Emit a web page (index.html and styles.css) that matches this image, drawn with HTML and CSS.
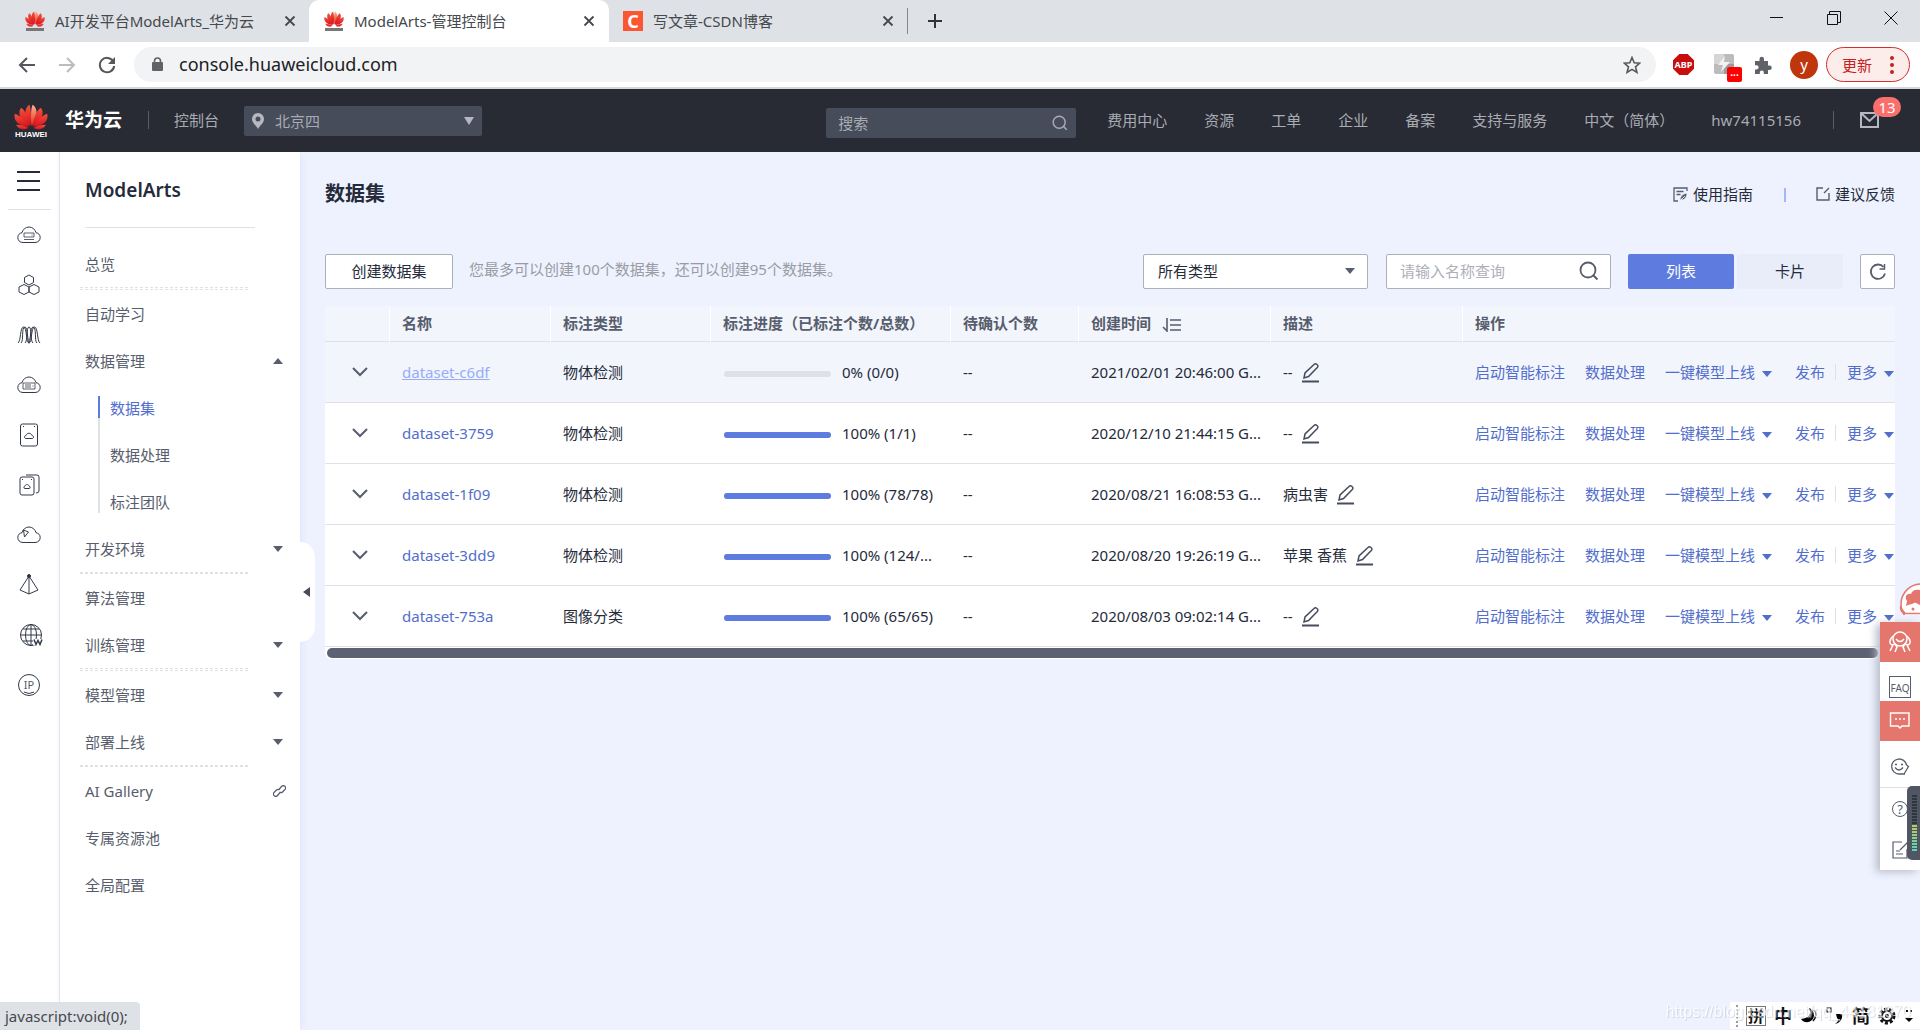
FILE: index.html
```html
<!DOCTYPE html>
<html lang="zh-CN">
<head>
<meta charset="utf-8">
<title>ModelArts-管理控制台</title>
<link rel="stylesheet" href="styles.css">
</head>
<body>
<svg class="defs" width="0" height="0" aria-hidden="true">
  <defs>
    <linearGradient id="petal" x1="0" y1="0" x2="0" y2="1"><stop offset="0" stop-color="#f4523f"/><stop offset="1" stop-color="#d8101a"/></linearGradient>
    <linearGradient id="petalLight" x1="0" y1="0" x2="0" y2="1"><stop offset="0" stop-color="#fbb48c"/><stop offset="1" stop-color="#e0301f"/></linearGradient>
    <symbol id="huawei" viewBox="0 0 40 32" preserveAspectRatio="none">
      <g fill="url(#petal)">
        <path d="M19.500 27C11 17 12 5 18 1c2 3 2.500 15 1.500 26z"/>
        <path fill="url(#petalLight)" d="M20.500 27C29 17 28 5 22 1c-2 3-2.500 15-1.500 26z"/>
        <path d="M18.500 27.500C6 21 4 9 8.500 4.500c4 2 9 13 10 23z"/>
        <path d="M21.500 27.500c12.500-6.500 14.500-18.500 10-23-4 2-9 13-10 23z"/>
        <path d="M17.500 28C4 27-1 19 1 12c6 2 13 9 16.500 16z"/>
        <path d="M22.500 28c13.500-1 18.500-9 16.500-16-6 2-13 9-16.500 16z"/>
        <path d="M17 29.500C11 33 5 31 2.500 25.500c5 0 10 1 14.500 4z"/>
        <path d="M23 29.500c6 3.500 12 1.500 14.500-4-5 0-10 1-14.500 4z"/>
      </g>
    </symbol>
    <symbol id="close" viewBox="0 0 12 12"><path d="M1.500 1.500l9 9m0-9l-9 9" stroke="currentColor" stroke-width="1.800" fill="none"/></symbol>
    <symbol id="chevron" viewBox="0 0 16 10"><path d="M1 1l7 7 7-7" stroke="#575d6c" stroke-width="2" fill="none"/></symbol>
    <symbol id="down" viewBox="0 0 10 6"><path d="M0 0h10L5 6z" fill="currentColor"/></symbol>
    <symbol id="edit" viewBox="0 0 18 20"><path d="M2 15l1-5 9-8.500c1-1 2-.8 3 0 1.200 1 1.200 2 .3 3L6.500 13.500 2 15z" fill="none" stroke="#464c5b" stroke-width="1.500"/><path d="M0 18.500h17" stroke="#464c5b" stroke-width="2"/></symbol>
    <symbol id="search" viewBox="0 0 20 20"><circle cx="9" cy="9" r="7.500" fill="none" stroke="currentColor" stroke-width="1.800"/><path d="M14 14l4.500 4.500" stroke="currentColor" stroke-width="2"/></symbol>
    <symbol id="cloud" viewBox="0 0 24 18"><path d="M6 16.500C2.500 16.500.8 14 .8 11.500S2.500 7 5 6.700C5.800 3.500 8.500 1 12 1s6.200 2.500 7 5.700c2.500.3 4.200 2.300 4.200 4.800s-1.700 5-5.200 5z"/></symbol>
  </defs>
</svg>

<header class="browser">
  <div class="tabs">
    <div class="tab">
      <svg class="fav"><use href="#huawei" height="16" width="20"/><rect x="1" y="17" width="18" height="3" fill="#777"/></svg>
      <span>AI开发平台ModelArts_华为云</span>
      <button class="plain" aria-label="关闭标签页"><svg width="12" height="12"><use href="#close"/></svg></button>
    </div>
    <div class="tab tab-active">
      <svg class="fav"><use href="#huawei" height="16" width="20"/><rect x="1" y="17" width="18" height="3" fill="#777"/></svg>
      <span>ModelArts-管理控制台</span>
      <button class="plain" aria-label="关闭标签页"><svg width="12" height="12"><use href="#close"/></svg></button>
    </div>
    <div class="tab">
      <b class="csdn">C</b>
      <span>写文章-CSDN博客</span>
      <button class="plain" aria-label="关闭标签页"><svg width="12" height="12"><use href="#close"/></svg></button>
    </div>
    <button class="plain newtab" aria-label="新标签页"><svg width="16" height="16"><path d="M8 1v14M1 8h14" stroke="#333" stroke-width="2"/></svg></button>
    <div class="winctl">
      <button class="plain" aria-label="最小化"><svg width="14" height="14"><path d="M0 6.500h13" stroke="#111"/></svg></button>
      <button class="plain" aria-label="还原"><svg width="14" height="14"><path d="M.5 3.500h10v10H.5zM2.500 3V.5h11v11H11" stroke="#111" fill="none"/></svg></button>
      <button class="plain" aria-label="关闭"><svg width="14" height="14"><path d="M.5.5l13 13m0-13l-13 13" stroke="#111"/></svg></button>
    </div>
  </div>
  <div class="toolbar">
    <button class="plain" aria-label="后退"><svg width="18" height="16"><path d="M17 8H2m7-7L2 8l7 7" stroke="#54575b" stroke-width="2" fill="none"/></svg></button>
    <button class="plain" aria-label="前进"><svg width="18" height="16"><path d="M1 8h15M9 1l7 7-7 7" stroke="#babcbe" stroke-width="2" fill="none"/></svg></button>
    <button class="plain" aria-label="刷新"><svg width="18" height="18"><path d="M15 5A7.200 7.200 0 1 0 16.200 10" stroke="#54575b" stroke-width="2" fill="none"/><path d="M17 1v7h-7z" fill="#54575b"/></svg></button>
    <div class="omnibox">
      <svg width="12" height="15"><rect y="5" x="1" width="11" height="9" rx="1" fill="#5f6368"/><path d="M3.500 6V4a3 3 0 0 1 6 0v2" stroke="#5f6368" stroke-width="1.600" fill="none"/></svg>
      <input type="text" aria-label="地址" value="console.huaweicloud.com">
      <button class="plain" aria-label="收藏"><svg width="18" height="18"><path d="M9 1.500l2.200 5.200 5.600.4-4.300 3.700 1.400 5.600L9 13.400l-4.900 3 1.400-5.600L1.200 7.100l5.600-.4z" stroke="#54575b" stroke-width="1.600" fill="none"/></svg></button>
    </div>
    <div class="exts">
      <span class="abp">ABP</span>
      <span class="ext"><svg width="22" height="22"><rect width="20" height="20" rx="2" fill="#bcbcbc"/><rect width="10" height="10" fill="#d6d6d6"/><rect x="10" y="10" width="10" height="10" fill="#9c9c9c"/><path d="M11 2L4 11h5l-2 7 9-10h-6z" fill="#f2f2f2"/></svg><i>...</i></span>
      <svg width="18" height="18"><path d="M1 5h4.500V3a2 2 0 0 1 4.500 0v2h4v4.500h1.500a2 2 0 0 1 0 4.500H14v4H9.800v-1.500a2 2 0 0 0-4 0V18H1v-4.500h1.500a2 2 0 0 0 0-4.300H1z" fill="#5f6368"/></svg>
      <span class="avatar">y</span>
      <button class="update">更新<svg width="4" height="18"><g fill="#c5221f"><circle cx="2" cy="2" r="2"/><circle cx="2" cy="9" r="2"/><circle cx="2" cy="16" r="2"/></g></svg></button>
    </div>
  </div>
</header>

<nav class="topnav">
  <a class="brand" href="#"><span class="logo"><svg width="34" height="26"><use href="#huawei"/></svg><small>HUAWEI</small></span><b>华为云</b></a>
  <i class="vline"></i>
  <a class="console" href="#">控制台</a>
  <button class="region"><svg width="12" height="16"><path fill-rule="evenodd" d="M6 0a6 6 0 0 1 6 6c0 4-4 6.500-6 10C4 12.500 0 10 0 6a6 6 0 0 1 6-6zm0 3.500a2.500 2.500 0 1 0 0 5 2.500 2.500 0 0 0 0-5z" fill="#b5b8c0"/></svg><span>北京四</span><svg class="tri" width="10" height="8"><path d="M0 0h10L5 8z" fill="#b5b8c0"/></svg></button>
  <label class="topsearch"><input type="text" placeholder="搜索" aria-label="搜索"><svg width="16" height="16"><use href="#search"/></svg></label>
  <div class="links">
    <a href="#">费用中心</a><a href="#">资源</a><a href="#">工单</a><a href="#">企业</a><a href="#">备案</a><a href="#">支持与服务</a><a href="#">中文（简体）</a><a href="#">hw74115156</a>
  </div>
  <i class="vline"></i>
  <a class="mail" href="#" aria-label="消息"><svg width="20" height="16"><path d="M1 1h17v14H1zM2 2l7.500 7L17 2" fill="none" stroke="#b5b8c0" stroke-width="2"/></svg><span>13</span></a>
</nav>

<div class="shell">
  <nav class="rail">
    <button class="plain menu" aria-label="菜单"><svg width="24" height="22"><path d="M0 2h23M0 11h23M0 20h23" stroke="#252b3a" stroke-width="2"/></svg></button>
    <a href="#" aria-label="云服务器"><svg class="ic" width="24" height="24"><use href="#cloud" y="3" width="24" height="18"/><path d="M7 10h10v4H7zM7 16.500h10M14.500 12h1" stroke-width=".8"/></svg></a>
    <a href="#" aria-label="伸缩"><svg class="ic" width="24" height="24"><path d="M12 2l4.500 2.500v5L12 12l-4.500-2.500v-5zM7 11.500l5 2.500v5L7 21.500 2 19v-5zM17 11.500l5 2.500v5l-5 2.500-5-2.500v-5z"/></svg></a>
    <a href="#" aria-label="监控"><svg class="ic" width="24" height="24"><path d="M1 20C4 18 3 4 6.500 4S9 20 12 20s2-16 5.500-16S20 18 23 20M4 20C7 18 4 4 8 4c3 0 2 16 5 16M11 20c3 0 2-16 5-16 4 0 1 14 4 16M8 20c3-2 1-16 4-16s1 14 4 16"/></svg></a>
    <a href="#" aria-label="云缓存"><svg class="ic" width="24" height="24"><use href="#cloud" y="3" width="24" height="18"/><path d="M6 10h12v6H6zM8 12h6M8 14h6M16 12.500v1" stroke-width=".8"/></svg></a>
    <a href="#" aria-label="云硬盘"><svg class="ic" width="24" height="24"><rect x="3.500" y="1" width="17" height="22" rx="2"/><path d="M9 15.500c-2 0-2-3 0-3 1-3 5-3 6 0 2 0 2 3 0 3zM6 3.500h1M17 3.500h1"/></svg></a>
    <a href="#" aria-label="备份"><svg class="ic" width="24" height="24"><rect x="3" y="4" width="14" height="18" rx="2"/><path d="M9 2h11q2 0 2 2v14q0 2-3 2M8 15.500c-1.500 0-1.500-2 0-2.500 1-2 3-2 4 0 1.500.5 1.500 2.500 0 2.500zM5 6.500h1M14 6.500h1"/></svg></a>
    <a href="#" aria-label="网络"><svg class="ic" width="24" height="24"><use href="#cloud" y="3" width="24" height="18"/><path d="M6.500 7l1 7M6.500 7l5 2-4 5"/></svg></a>
    <a href="#" aria-label="弹性"><svg class="ic" width="24" height="24"><path d="M12 3L3 17l9 4 9-4zM12 3v18"/><circle cx="12" cy="3" r="1.500" fill="#252b3a"/></svg></a>
    <a class="globe" href="#" aria-label="域名"><svg class="ic" width="24" height="24"><circle cx="12" cy="12" r="10.500"/><ellipse cx="12" cy="12" rx="5.500" ry="10.500"/><path d="M12 1.500v21M1.500 12h21M4 6h16M4 18h12"/><path d="M14 16h9v6h-9z" fill="#fff" stroke="none"/><path d="M15 16.500l2 5 2-4 2 4 2-5" stroke-width="1.500"/></svg></a>
    <a href="#" aria-label="公网IP"><svg class="ic" width="24" height="24"><circle cx="12" cy="12" r="10.500"/><path d="M7 19q5 3 10 0"/><text x="12" y="16" text-anchor="middle">IP</text></svg></a>
  </nav>

  <aside class="side">
    <h2>ModelArts</h2>
    <ul>
      <li class="dash double"><a href="#">总览</a></li>
      <li><a href="#">自动学习</a></li>
      <li><a href="#">数据管理<svg class="up" width="10" height="6"><use href="#down"/></svg></a>
        <ul class="sub">
          <li class="on"><a href="#">数据集</a></li>
          <li><a href="#">数据处理</a></li>
          <li><a href="#">标注团队</a></li>
        </ul>
      </li>
      <li class="dash"><a href="#">开发环境<svg width="10" height="6"><use href="#down"/></svg></a></li>
      <li><a href="#">算法管理</a></li>
      <li class="dash double"><a href="#">训练管理<svg width="10" height="6"><use href="#down"/></svg></a></li>
      <li><a href="#">模型管理<svg width="10" height="6"><use href="#down"/></svg></a></li>
      <li class="dash"><a href="#">部署上线<svg width="10" height="6"><use href="#down"/></svg></a></li>
      <li><a href="#" class="gallery">AI Gallery<svg width="13" height="12" fill="none" stroke="#575d6c" stroke-width="1.200"><path d="M6 4.500l2.500-3a2.200 2.200 0 0 1 3.500 3L9.500 7a2 2 0 0 1-3 0M7 7.500l-2.500 3a2.200 2.200 0 0 1-3.500-3L3.500 5a2 2 0 0 1 3 0"/></svg></a></li>
      <li><a href="#">专属资源池</a></li>
      <li><a href="#">全局配置</a></li>
    </ul>
    <button class="plain fold" aria-label="收起"><svg width="7" height="10"><path d="M7 0v10L0 5z" fill="#464c5b"/></svg></button>
  </aside>

  <main>
    <div class="titlebar">
      <h1>数据集</h1>
      <a href="#"><svg width="15" height="15" fill="none" stroke="#575d6c" stroke-width="1.300"><path d="M14 4V1H1v13h4M3.500 4.500h7M3.500 7.500h4"/><path d="M7 13c0-3 2-6 7-7 0 4-2 7-6 7l4-4" fill="#575d6c" stroke="#eef2ff" stroke-width=".8"/></svg>使用指南</a>
      <i></i>
      <a href="#"><svg width="14" height="14" fill="none" stroke="#575d6c" stroke-width="1.400"><path d="M7 1H1v12h12V6M8 6l5-5"/></svg>建议反馈</a>
    </div>
    <div class="filters">
      <button class="btn create">创建数据集</button>
      <p>您最多可以创建100个数据集，还可以创建95个数据集。</p>
      <div class="select"><select aria-label="类型"><option>所有类型</option></select><svg width="10" height="6"><use href="#down"/></svg></div>
      <label class="query"><input type="text" placeholder="请输入名称查询" aria-label="名称"><svg width="20" height="20"><use href="#search"/></svg></label>
      <div class="switch"><button class="on">列表</button><button>卡片</button></div>
      <button class="btn refresh" aria-label="刷新"><svg width="18" height="18"><path d="M14.500 4A7.200 7.200 0 1 0 16 10.500" stroke="#575d6c" stroke-width="1.800" fill="none"/><path d="M15.500 1v5h-5" stroke="#575d6c" stroke-width="1.500" fill="none"/></svg></button>
    </div>
    <div class="tablewrap">
    <table>
      <colgroup><col class="c-x"><col class="c-name"><col class="c-type"><col class="c-prog"><col class="c-wait"><col class="c-time"><col class="c-desc"><col class="c-ops"></colgroup>
      <thead><tr><th></th><th>名称</th><th>标注类型</th><th>标注进度（已标注个数/总数）</th><th>待确认个数</th><th>创建时间<svg class="sort" width="19" height="14" fill="none" stroke="#575d6c" stroke-width="1.600"><path d="M5 0v13L1 9M8 2h11M8 7h11M8 12h11"/></svg></th><th>描述</th><th>操作</th></tr></thead>
      <tbody>
        <tr class="hover"><td><button class="plain" aria-label="展开"><svg width="16" height="10"><use href="#chevron"/></svg></button></td><td><a href="#">dataset-c6df</a></td><td>物体检测</td><td><div class="prog"><span class="bar"><b style="width:0%"></b></span><span class="pt">0% (0/0)</span></div></td><td>--</td><td>2021/02/01 20:46:00 G...</td><td><div class="desc">--<svg width="18" height="20"><use href="#edit"/></svg></div></td><td><div class="ops"><a href="#">启动智能标注</a><a href="#">数据处理</a><a href="#">一键模型上线<svg width="10" height="6"><use href="#down"/></svg></a><a href="#">发布</a><a href="#">更多<svg width="10" height="6"><use href="#down"/></svg></a></div></td></tr>
        <tr><td><button class="plain" aria-label="展开"><svg width="16" height="10"><use href="#chevron"/></svg></button></td><td><a href="#">dataset-3759</a></td><td>物体检测</td><td><div class="prog"><span class="bar"><b style="width:100%"></b></span><span class="pt">100% (1/1)</span></div></td><td>--</td><td>2020/12/10 21:44:15 G...</td><td><div class="desc">--<svg width="18" height="20"><use href="#edit"/></svg></div></td><td><div class="ops"><a href="#">启动智能标注</a><a href="#">数据处理</a><a href="#">一键模型上线<svg width="10" height="6"><use href="#down"/></svg></a><a href="#">发布</a><a href="#">更多<svg width="10" height="6"><use href="#down"/></svg></a></div></td></tr>
        <tr><td><button class="plain" aria-label="展开"><svg width="16" height="10"><use href="#chevron"/></svg></button></td><td><a href="#">dataset-1f09</a></td><td>物体检测</td><td><div class="prog"><span class="bar"><b style="width:100%"></b></span><span class="pt">100% (78/78)</span></div></td><td>--</td><td>2020/08/21 16:08:53 G...</td><td><div class="desc">病虫害<svg width="18" height="20"><use href="#edit"/></svg></div></td><td><div class="ops"><a href="#">启动智能标注</a><a href="#">数据处理</a><a href="#">一键模型上线<svg width="10" height="6"><use href="#down"/></svg></a><a href="#">发布</a><a href="#">更多<svg width="10" height="6"><use href="#down"/></svg></a></div></td></tr>
        <tr><td><button class="plain" aria-label="展开"><svg width="16" height="10"><use href="#chevron"/></svg></button></td><td><a href="#">dataset-3dd9</a></td><td>物体检测</td><td><div class="prog"><span class="bar"><b style="width:100%"></b></span><span class="pt">100% (124/...</span></div></td><td>--</td><td>2020/08/20 19:26:19 G...</td><td><div class="desc">苹果 香蕉<svg width="18" height="20"><use href="#edit"/></svg></div></td><td><div class="ops"><a href="#">启动智能标注</a><a href="#">数据处理</a><a href="#">一键模型上线<svg width="10" height="6"><use href="#down"/></svg></a><a href="#">发布</a><a href="#">更多<svg width="10" height="6"><use href="#down"/></svg></a></div></td></tr>
        <tr><td><button class="plain" aria-label="展开"><svg width="16" height="10"><use href="#chevron"/></svg></button></td><td><a href="#">dataset-753a</a></td><td>图像分类</td><td><div class="prog"><span class="bar"><b style="width:100%"></b></span><span class="pt">100% (65/65)</span></div></td><td>--</td><td>2020/08/03 09:02:14 G...</td><td><div class="desc">--<svg width="18" height="20"><use href="#edit"/></svg></div></td><td><div class="ops"><a href="#">启动智能标注</a><a href="#">数据处理</a><a href="#">一键模型上线<svg width="10" height="6"><use href="#down"/></svg></a><a href="#">发布</a><a href="#">更多<svg width="10" height="6"><use href="#down"/></svg></a></div></td></tr>
      </tbody>
    </table>
    </div>
    <div class="scroll"><span></span></div>
  </main>
</div>

<svg class="mascot" width="21" height="32" viewBox="0 0 21 32"><circle cx="22" cy="21" r="20" fill="#fff" stroke="#e4766d" stroke-width="1.500"/><path d="M1 22c2 4 5 6 6 9C3 31 0 28 1 22zM8 18c-3-4 0-8 4-7 1-4 5-5 9-4v15c-3-1-4-3-6-2-3 2-5 1-8 3z" fill="#e4766d"/><circle cx="14" cy="26" r="1.500" fill="#e4766d"/><path d="M5 30.500h16" stroke="#e4766d" stroke-width="1.500"/></svg>
<aside class="float">
  <button class="red" aria-label="客服"><svg width="22" height="22" fill="none" stroke="#fff" stroke-width="1.500"><circle cx="11" cy="8" r="7"/><path d="M7 8q4 5 8 0M4 5c-4 4-4 8-1 9l3-1 2 3-2 5M1 20l3-6M18 5c4 4 4 8 1 9l-3-1-2 3 2 5M21 20l-3-6"/></svg></button>
  <button class="faq" aria-label="FAQ"><span>FAQ</span></button>
  <button class="red" aria-label="咨询"><svg width="22" height="18" fill="none" stroke="#fff" stroke-width="1.400"><path d="M1.500 1h18.500v13h-7l-2 2-2-2H1.500zM6 7h2m2 0h2m2 0h2"/></svg></button>
  <button class="smile" aria-label="满意度"><svg width="20" height="18" fill="none" stroke="#575d6c" stroke-width="1.300"><path d="M15 16H9a7.500 7.500 0 1 1 7.500-9l2 1.500L14 16M5 9.500q4 5 8 0M5 6.500h2M11 6.500h2"/></svg></button>
  <button aria-label="帮助"><svg width="18" height="18"><circle cx="9" cy="9" r="7.500" fill="none" stroke="#575d6c"/><text x="9" y="14" text-anchor="middle">?</text></svg></button>
  <button aria-label="反馈"><svg width="18" height="18" fill="none" stroke="#575d6c" stroke-width="1.200"><path d="M11 1H2v16h14V8M5 10h4M5 13h7M9 9l8-8"/></svg></button>
</aside>
<div class="gauge"></div>
<div class="status">javascript:void(0);</div>
<div class="ime"><i></i><span class="boxed">拼</span><span>中</span><svg width="18" height="18"><path d="M9 1c3 6 0 10-8 11 4 6 13 3 13-4 0-3-2-6-5-7z"/><path d="M14 3c3 3 2 8-1 11" fill="none" stroke="#111" stroke-width="1.500"/></svg><svg width="18" height="18"><rect x="1" y="1" width="4" height="4" fill="none" stroke="#111"/><path d="M10 7h6c1 5-2 9-7 10 3-2 4-4 2-6z"/></svg><span>简</span><svg width="18" height="18"><circle cx="9" cy="9" r="7" fill="none" stroke="#111" stroke-width="3" stroke-dasharray="3 2"/><circle cx="9" cy="9" r="5" fill="none" stroke="#111" stroke-width="2"/><circle cx="9" cy="9" r="2"/></svg><svg width="10" height="16"><path d="M2 3h2m2 0h2" stroke="#111" stroke-width="2"/><path d="M1 10h8l-4 4z"/></svg></div>
<div class="watermark">https://blog.csdn.net/qq_44181970</div>
</body>
</html>
```
FILE: styles.css
```css
* { box-sizing: border-box; }
body {
  margin: 0; min-height: 100vh; display: flex; flex-direction: column;
  font: 15px/22px "Noto Sans", "Noto Sans CJK SC", sans-serif;
  color: #252b3a; background: #eef2ff;
}
.defs { position: absolute; }
svg { flex: none; display: block; }
a { color: inherit; text-decoration: none; }
button, input, select { font: inherit; color: inherit; }
button { cursor: pointer; padding: 0; }
input { border: 0; outline: 0; background: none; padding: 0; min-width: 0; }
ul { list-style: none; margin: 0; padding: 0; }
h1, h2, p { margin: 0; }
.plain { border: 0; background: none; display: flex; align-items: center; justify-content: center; }

/* browser frame */
.browser { background: #fff; border-bottom: 2px solid #d5d7dc; }
.tabs { display: flex; align-items: center; height: 42px; background: #dee1e6; color: #45494d; }
.tab { display: flex; align-items: center; width: 298px; height: 42px; padding: 0 13px 0 14px; }
.tab:first-child { width: 309px; padding-left: 25px; }
.tab-active { width: 300px; padding: 0 14px 0 15px; background: #fff; border-radius: 10px 10px 0 0; }
.tab span { flex: 1; margin-left: 10px; white-space: nowrap; }
.fav { width: 20px; height: 20px; }
.csdn { width: 20px; height: 20px; background: #fc5531; color: #fff; text-align: center; font-size: 18px; line-height: 20px; }
.newtab { border-left: 1px solid #85888c; height: 26px; padding-left: 19px; }
.winctl { margin-left: auto; display: flex; gap: 43px; padding: 0 22px 6px 0; }
.toolbar { display: flex; align-items: center; height: 45px; padding-left: 18px; gap: 22px; }
.omnibox { flex: 1; display: flex; align-items: center; height: 35px; border-radius: 18px; background: #f1f3f4; padding: 0 15px 0 17px; margin-left: -4px; }
.omnibox input { flex: 1; height: 26px; margin: 0 0 2px 16px; font-size: 18px; color: #202124; }
.exts { display: flex; align-items: center; margin-left: -5px; padding-right: 10px; }
.abp { width: 21px; height: 21px; background: #c70d0d; color: #fff; font: bold 9px/21px "Noto Sans", sans-serif; text-align: center; clip-path: polygon(30% 0, 70% 0, 100% 30%, 100% 70%, 70% 100%, 30% 100%, 0 70%, 0 30%); }
.ext { position: relative; margin: 0 18px 0 20px; }
.ext i { position: absolute; left: 13px; top: 13px; width: 15px; height: 15px; border-radius: 2px; background: #f00; color: #fff; font: bold 10px/11px "Noto Sans", sans-serif; text-align: center; }
.avatar { width: 28px; height: 28px; border-radius: 50%; background: #bf360c; color: #fff; text-align: center; line-height: 26px; margin: 0 8px 0 18px; }
.update { display: flex; align-items: center; justify-content: space-between; width: 84px; height: 35px; padding: 0 15px; border: 1px solid #d3302b; border-radius: 18px; background: #fcecea; color: #c5221f; }

/* console header */
.topnav { position: relative; z-index: 1; display: flex; align-items: center; height: 63px; background: #282b33; color: #a8abb3; padding: 0 40px 2px 14px; }
.brand { display: flex; align-items: center; gap: 17px; color: #fff; }
.brand b { font-size: 19px; }
.logo { display: flex; flex-direction: column; align-items: center; gap: 1px; width: 34px; padding-top: 4px; }
.logo small { font: bold 8px/8px "Liberation Sans", sans-serif; }
.vline { width: 1px; height: 18px; background: #575d6c; margin: 0 25px 0 26px; }
.region { display: flex; align-items: center; gap: 11px; width: 238px; height: 30px; margin: 2px 0 0 25px; padding: 0 8px; border: 0; border-radius: 2px; background: #464c59; }
.tri { margin-left: auto; }
.topsearch { display: flex; align-items: center; width: 250px; height: 30px; margin: 6px 31px 0 auto; padding: 0 8px 0 12px; border-radius: 2px; background: #464c59; }
.topsearch input { flex: 1; }
.topsearch input::placeholder { color: #a8abb3; opacity: 1; }
.links { display: flex; gap: 37px; }
.topnav .links + .vline { margin: 0 26px 0 32px; }
.mail { position: relative; width: 20px; }
.mail span { position: absolute; left: 13px; top: -15px; width: 28px; height: 20px; border-radius: 10px; background: #fa6f6c; color: #fff; text-align: center; line-height: 20px; }

/* page shell */
.shell { flex: 1; display: flex; }
.rail { width: 60px; padding-right: 1px; border-right: 1px solid #dfe1e6; background: #fff; display: flex; flex-direction: column; align-items: center; }
.menu { height: 58px; width: 43px; border-bottom: 1px solid #dfe1e6; }
.rail a { height: 50px; display: flex; align-items: center; }
.rail .globe { padding-left: 4px; }
.ic { fill: none; stroke: #333948; }
.ic text { font: 11px "Noto Sans", sans-serif; fill: #575d6c; stroke: none; }
.side { position: relative; width: 240px; background: #fff; padding-left: 20px; color: #575d6c; box-shadow: 2px 0 8px #dfe6fa; }
.side h2 { margin: 0 45px 12px 5px; height: 76px; border-bottom: 1px solid #dfe1e6; font-size: 19px; line-height: 76px; font-weight: 600; color: #252b3a; }
.side a { display: flex; align-items: center; justify-content: space-between; height: 47px; padding: 0 17px 0 5px; }
.side .gallery { padding-right: 14px; }
.up { transform: rotate(180deg); }
.dash::after { content: ""; display: block; width: 170px; height: 2px; background: repeating-linear-gradient(90deg, #dfe1e6 0 3px, transparent 3px 5px); }
.double::after { height: 3px; background: repeating-linear-gradient(90deg, transparent 0 3px, #fff 3px 5px), linear-gradient(#dfe1e6 1px, #fff 1px 2px, #dfe1e6 2px); }
.sub { position: relative; }
.sub::before { content: ""; position: absolute; left: 18px; top: 12px; bottom: 12px; width: 2px; background: #dfe1e6; }
.sub a { padding-left: 30px; }
.sub .on { color: #526ecc; position: relative; }
.sub .on::before { content: ""; position: absolute; left: 18px; top: 12px; height: 22px; width: 2px; background: #5e7ce0; }
.fold { position: absolute; left: 240px; top: 390px; width: 15px; height: 100px; border-radius: 0 15px 15px 0; background: #fff; padding-right: 3px; }

main { flex: 1; min-width: 0; padding: 0 25px; }
.titlebar { display: flex; align-items: center; height: 84px; }
.titlebar h1 { flex: 1; font-size: 20px; }
.titlebar a { display: flex; align-items: center; gap: 5px; }
.titlebar i { width: 2px; height: 14px; margin: 2px 30px 0 31px; background: #a5b5fa; }
.filters { display: flex; align-items: center; padding: 18px 0 17px; }
.filters p { color: #999ca3; margin: 0 auto 5px 16px; }
.btn { height: 35px; border: 1px solid #adb0b8; border-radius: 2px; background: #fff; }
.create { width: 128px; padding-bottom: 1px; }
.select, .query { display: flex; align-items: center; width: 225px; height: 35px; border: 1px solid #adb0b8; border-radius: 2px; background: #fff; margin-right: 18px; padding: 0 12px 1px 14px; color: #575d6c; }
.select select { flex: 1; appearance: none; border: 0; background: none; color: #252b3a; padding: 0; outline: 0; }
.query input { flex: 1; }
.query { margin-right: 17px; padding: 0 11px 2px 13px; }
.query input::placeholder { color: #adb0b8; opacity: 1; }
.switch { display: flex; gap: 3px; margin-right: 17px; }
.switch button { width: 106px; height: 35px; padding-bottom: 1px; border: 0; border-radius: 2px; background: #e9edfa; }
.switch .on { background: #5e7ce0; color: #fff; }
.refresh { width: 35px; display: flex; align-items: center; justify-content: center; }

.tablewrap { overflow: hidden; }
table { width: 100%; table-layout: fixed; border-collapse: separate; border-spacing: 0; background: #fff; }
.c-x { width: 65px; } .c-name { width: 161px; } .c-type { width: 160px; } .c-prog { width: 240px; }
.c-wait { width: 128px; } .c-time, .c-desc { width: 192px; }
th, td { border-bottom: 1px solid #dfe1e6; padding: 0 0 0 12px; text-align: left; white-space: nowrap; }
th { height: 36px; padding-bottom: 2px; background: #f2f5fc; color: #575d6c; font-weight: bold; border-right: 1px solid #fff; }
th:last-child { border-right: 0; }
td { height: 61px; }
td:first-child { padding: 0; }
td:first-child button { width: 70px; height: 60px; }
td a { color: #526ecc; }
.hover td { background: #f2f5fc; }
.hover td:nth-child(2) a { color: #96adfa; text-decoration: underline; }
.sort { display: inline-block; margin-left: 11px; vertical-align: -3px; }
.prog { display: flex; align-items: center; gap: 11px; padding-left: 1px; }
.bar { width: 107px; height: 6px; border-radius: 3px; background: #dfe1e6; margin-top: 3px; }
.bar b { display: block; height: 6px; border-radius: 3px; background: #5e7ce0; }
.desc { display: flex; align-items: center; gap: 9px; }
.desc svg { margin-top: 2px; }
.ops { display: flex; align-items: center; }
.ops a { display: flex; align-items: center; gap: 7px; margin-right: 20px; }
.ops svg { margin-top: 3px; }
.ops a:nth-child(3) { margin-right: 23px; }
.ops a:nth-child(4) { margin-right: 10px; }
.ops a:last-child { border-left: 1px solid #dfe1e6; padding-left: 11px; margin: 0; line-height: 16px; }
.scroll { height: 12px; margin-right: 15px; padding: 1px 2px; background: #fff; border-radius: 0 0 6px 6px; }
.scroll span { display: block; height: 10px; border-radius: 5px; background: #5c6173; }

/* overlays pinned to the window edge */
.mascot { position: fixed; right: 0; top: 583px; }
.float { position: fixed; right: 0; top: 622px; width: 40px; background: #fff; box-shadow: -4px 2px 8px #b9bdca; display: flex; flex-direction: column; }
.float button { display: flex; align-items: center; justify-content: center; height: 40px; border: 0; background: #fff; }
.float .red { background: #e4766d; }
.float .faq { padding-top: 11px; height: 39px; }
.faq span { width: 22px; height: 22px; border: 1px solid #575d6c; font: 10px/22px "Noto Sans", sans-serif; text-align: center; color: #575d6c; }
.float .smile { height: 47px; border-bottom: 1px solid #dfe1e6; padding-top: 6px; }
.float button:nth-child(5) { height: 42px; }
.float text { font: 13px "Noto Sans", sans-serif; fill: #575d6c; }
.gauge { position: fixed; right: 0; top: 786px; width: 13px; height: 74px; border-radius: 5px 0 0 5px; background: #505664; }
.gauge::before { content: ""; position: absolute; left: 5px; top: 9px; width: 5px; height: 57px; background: repeating-linear-gradient(transparent 0 2px, #505664 2px 3px), linear-gradient(#30343f 0 30px, #c0cc5a 30px, #4fd8bc 57px); }
.status { position: fixed; left: 0; bottom: 0; width: 140px; height: 28px; padding-left: 5px; border-radius: 0 4px 0 0; background: #dee1e6; color: #45494d; line-height: 28px; }
.ime { position: fixed; right: 0; bottom: 1px; width: 190px; height: 27px; padding: 0 6px 0 6px; display: flex; align-items: center; justify-content: space-between; background: #fff; color: #111; font-size: 18px; font-weight: bold; }
.ime i { height: 22px; border-left: 2px dotted #999; }
.boxed { width: 20px; height: 20px; border: 1px solid #777; line-height: 18px; font-size: 16px; text-align: center; }
.watermark { position: fixed; right: 9px; bottom: 7px; color: #fff; text-shadow: 1px 1px 1px #c4c8d4; opacity: .7; font: 16px/22px "Liberation Sans", sans-serif; }
```
